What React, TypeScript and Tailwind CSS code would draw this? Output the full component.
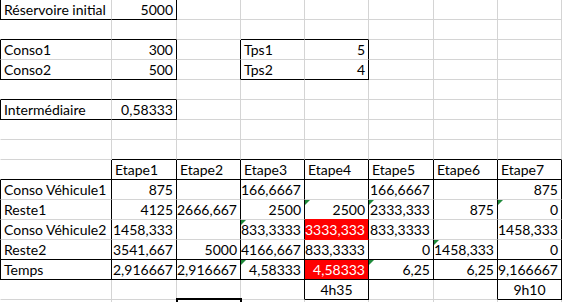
import React from "react";

const widths = [112, 65, 64, 64, 64, 65, 64, 64];
const ROWS = 16;

type Cell = { t?: string; align?: "l" | "r" | "c"; red?: boolean; tri?: boolean };

const sheet: Record<number, Record<number, Cell>> = {
  1: { 0: { t: "Réservoire initial" }, 1: { t: "5000", align: "r" } },
  3: { 0: { t: "Conso1" }, 1: { t: "300", align: "r" }, 3: { t: "Tps1" }, 4: { t: "5", align: "r" } },
  4: { 0: { t: "Conso2" }, 1: { t: "500", align: "r" }, 3: { t: "Tps2" }, 4: { t: "4", align: "r" } },
  6: { 0: { t: "Intermédiaire" }, 1: { t: "0,58333", align: "r" } },
  9: {
    1: { t: "Etape1" },
    2: { t: "Etape2" },
    3: { t: "Etape3" },
    4: { t: "Etape4" },
    5: { t: "Etape5" },
    6: { t: "Etape6" },
    7: { t: "Etape7" },
  },
  10: {
    0: { t: "Conso Véhicule1" },
    1: { t: "875", align: "r" },
    3: { t: "166,6667", align: "r" },
    5: { t: "166,6667", align: "r" },
    7: { t: "875", align: "r" },
  },
  11: {
    0: { t: "Reste1" },
    1: { t: "4125", align: "r" },
    2: { t: "2666,667", align: "r" },
    3: { t: "2500", align: "r" },
    4: { t: "2500", align: "r", tri: true },
    5: { t: "2333,333", align: "r", tri: true },
    6: { t: "875", align: "r" },
    7: { t: "0", align: "r", tri: true },
  },
  12: {
    0: { t: "Conso Véhicule2" },
    1: { t: "1458,333", align: "r" },
    3: { t: "833,3333", align: "r", tri: true },
    4: { t: "3333,333", align: "r", red: true },
    5: { t: "833,3333", align: "r" },
    7: { t: "1458,333", align: "r" },
  },
  13: {
    0: { t: "Reste2" },
    1: { t: "3541,667", align: "r" },
    2: { t: "5000", align: "r" },
    3: { t: "4166,667", align: "r" },
    4: { t: "833,3333", align: "r" },
    5: { t: "0", align: "r" },
    6: { t: "1458,333", align: "r", tri: true },
    7: { t: "0", align: "r" },
  },
  14: {
    0: { t: "Temps" },
    1: { t: "2,916667", align: "r" },
    2: { t: "2,916667", align: "r" },
    3: { t: "4,58333", align: "r", tri: true },
    4: { t: "4,58333", align: "r", red: true },
    5: { t: "6,25", align: "r", tri: true },
    6: { t: "6,25", align: "r" },
    7: { t: "9,166667", align: "r" },
  },
  15: { 4: { t: "4h35", align: "c" }, 7: { t: "9h10", align: "c" } },
};

// boxes: [r1, c1, r2, c2]
const boxes: number[][] = [
  [1, 0, 1, 1],
  [3, 0, 4, 1],
  [3, 3, 4, 4],
  [6, 0, 6, 1],
  [10, 0, 13, 0],
  [15, 4, 15, 4],
  [15, 7, 15, 7],
];
for (let c = 1; c <= 7; c++) {
  boxes.push([9, c, 9, c]);
  boxes.push([10, c, 13, c]);
}
for (let c = 0; c <= 7; c++) boxes.push([14, c, 14, c]);

const rightBlack = new Set<string>();
const bottomBlack = new Set<string>();
const leftBlack = new Set<number>();
for (const [r1, c1, r2, c2] of boxes) {
  for (let r = r1; r <= r2; r++) {
    rightBlack.add(`${r}-${c2}`);
    if (c1 === 0) leftBlack.add(r);
    else rightBlack.add(`${r}-${c1 - 1}`);
  }
  for (let c = c1; c <= c2; c++) {
    bottomBlack.add(`${r2}-${c}`);
    if (r1 > 1) bottomBlack.add(`${r1 - 1}-${c}`);
  }
}

function SheetCell({ r, c }: { r: number; c: number }) {
  const cell = sheet[r]?.[c] ?? {};
  const below = sheet[r + 1]?.[c];
  const rb = rightBlack.has(`${r}-${c}`);
  const bb = bottomBlack.has(`${r}-${c}`);
  const right = rb ? "border-r-black" : cell.red ? "border-r-[#ff0000]" : "border-r-[#d4d4d4]";
  const bottom = bb
    ? "border-b-black"
    : cell.red || below?.red
    ? "border-b-[#ff0000]"
    : "border-b-[#d4d4d4]";
  const left = c === 0 ? (leftBlack.has(r) ? "border-l border-l-black" : "border-l border-l-white") : "";
  const align =
    cell.align === "r" ? "justify-end" : cell.align === "c" ? "justify-center" : "justify-start";
  return (
    <div
      className={`relative flex h-5 items-end overflow-visible whitespace-nowrap border-r border-b px-[3px] pb-[1px] leading-[17px] ${right} ${bottom} ${left} ${align} ${
        cell.red ? "bg-[#ff0000] text-white" : "text-black"
      }`}
    >
      {cell.tri && (
        <span className="absolute left-0 top-0 h-0 w-0 border-t-[5px] border-r-[5px] border-t-[#1f8a3b] border-r-transparent" />
      )}
      {cell.t}
    </div>
  );
}

export default function App() {
  return (
    <div className="relative h-[302px] w-[562px] overflow-hidden bg-white font-['Lato','Liberation_Sans',sans-serif] text-[14px]">
      <div className="grid grid-cols-[112px_65px_64px_64px_64px_65px_64px_64px]">
        {Array.from({ length: ROWS }, (_, i) =>
          widths.map((_, c) => <SheetCell key={`${i + 1}-${c}`} r={i + 1} c={c} />)
        )}
      </div>
      {/* selected cell */}
      <div className="absolute left-[176px] top-[298px] h-[24px] w-[66px] border-2 border-black" />
    </div>
  );
}
